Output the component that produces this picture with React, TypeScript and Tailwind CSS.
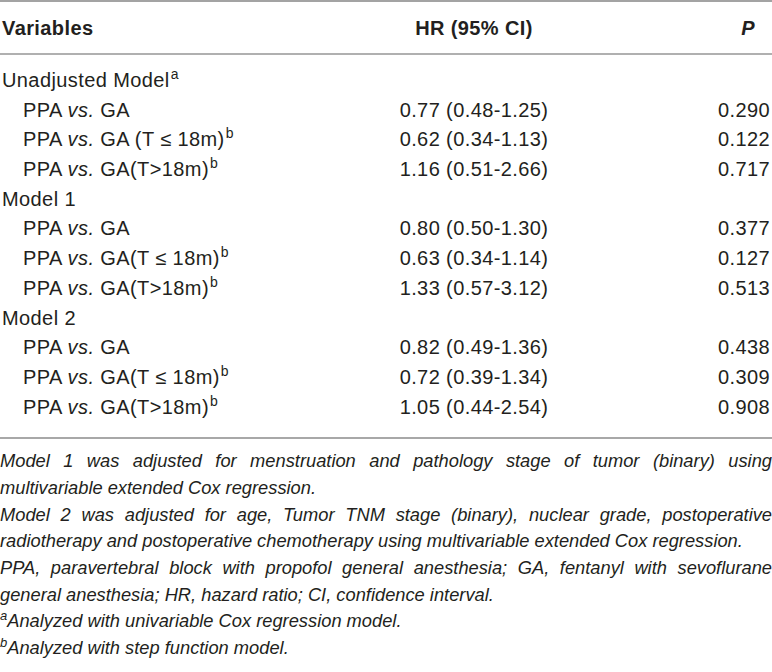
import React from 'react';

type Row = {
  label: React.ReactNode;
  hr?: string;
  p?: string;
  sub?: boolean;
};

const Vs = () => <i>vs.</i>;

const Sup = ({ children }: { children: React.ReactNode }) => (
  <sup className="text-[14px] relative -top-[8px] ml-[1px]">{children}</sup>
);

const rows: Row[] = [
  { label: <>Unadjusted Model<Sup>a</Sup></> },
  { label: <>PPA <Vs /> GA</>, hr: '0.77 (0.48-1.25)', p: '0.290', sub: true },
  { label: <>PPA <Vs /> GA (T ≤ 18m)<Sup>b</Sup></>, hr: '0.62 (0.34-1.13)', p: '0.122', sub: true },
  { label: <>PPA <Vs /> GA(T&gt;18m)<Sup>b</Sup></>, hr: '1.16 (0.51-2.66)', p: '0.717', sub: true },
  { label: <>Model 1</> },
  { label: <>PPA <Vs /> GA</>, hr: '0.80 (0.50-1.30)', p: '0.377', sub: true },
  { label: <>PPA <Vs /> GA(T ≤ 18m)<Sup>b</Sup></>, hr: '0.63 (0.34-1.14)', p: '0.127', sub: true },
  { label: <>PPA <Vs /> GA(T&gt;18m)<Sup>b</Sup></>, hr: '1.33 (0.57-3.12)', p: '0.513', sub: true },
  { label: <>Model 2</> },
  { label: <>PPA <Vs /> GA</>, hr: '0.82 (0.49-1.36)', p: '0.438', sub: true },
  { label: <>PPA <Vs /> GA(T ≤ 18m)<Sup>b</Sup></>, hr: '0.72 (0.39-1.34)', p: '0.309', sub: true },
  { label: <>PPA <Vs /> GA(T&gt;18m)<Sup>b</Sup></>, hr: '1.05 (0.44-2.54)', p: '0.908', sub: true },
];

export default function App() {
  return (
    <div className="w-[772px] h-[672px] overflow-hidden bg-white text-[#231f20] font-['Liberation_Sans',Arial,sans-serif]">
      {/* Table */}
      <div className="border-t-2 border-[#a3a3a3] text-[20px] tracking-[0.4px]">
        <div className="grid grid-cols-[376px_196px_1fr] items-center h-[53px] border-b-2 border-[#b0b0b0] font-bold">
          <div className="pl-[2px]">Variables</div>
          <div className="text-center">HR (95% CI)</div>
          <div className="text-right pr-[17px] italic">P</div>
        </div>
        <div className="pt-[11px] pb-[15px] border-b-2 border-[#a8a8a8]">
          {rows.map((r, i) => (
            <div key={i} className="grid grid-cols-[376px_196px_1fr] items-center h-[29.7px] leading-[29.7px]">
              <div className={r.sub ? 'pl-[23px]' : 'pl-[2px]'}>{r.label}</div>
              <div className="text-center">{r.hr}</div>
              <div className="text-right pr-[2px]">{r.p}</div>
            </div>
          ))}
        </div>
      </div>

      {/* Footnotes */}
      <div className="pt-[9px] italic text-[18.3px] leading-[26.7px] text-[#231f20]">
        <div className="text-justify [text-align-last:justify]">
          Model 1 was adjusted for menstruation and pathology stage of tumor (binary) using
        </div>
        <div>multivariable extended Cox regression.</div>
        <div className="text-justify [text-align-last:justify]">
          Model 2 was adjusted for age, Tumor TNM stage (binary), nuclear grade, postoperative
        </div>
        <div>radiotherapy and postoperative chemotherapy using multivariable extended Cox regression.</div>
        <div className="text-justify [text-align-last:justify]">
          PPA, paravertebral block with propofol general anesthesia; GA, fentanyl with sevoflurane
        </div>
        <div>general anesthesia; HR, hazard ratio; CI, confidence interval.</div>
        <div>
          <sup className="text-[13px] relative -top-[7px]">a</sup>Analyzed with univariable Cox regression model.
        </div>
        <div>
          <sup className="text-[13px] relative -top-[7px]">b</sup>Analyzed with step function model.
        </div>
      </div>
    </div>
  );
}
